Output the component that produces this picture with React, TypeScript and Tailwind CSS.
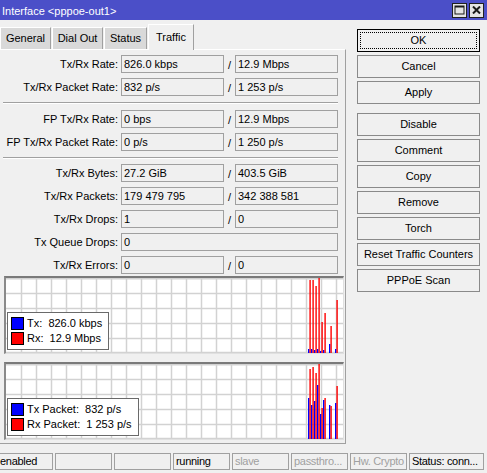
import React from "react";

type Bar = { x: number; blue: number; red: number };

const chart1: Bar[] = [
  { x: 302, blue: 349, red: 280 },
  { x: 305, blue: 349, red: 280 },
  { x: 308, blue: 350, red: 286 },
  { x: 311, blue: 349, red: 278 },
  { x: 314, blue: 351, red: 322 },
  { x: 317, blue: 350, red: 313 },
  { x: 323, blue: 344, red: 326 },
  { x: 329, blue: 349, red: 300 },
];

const chart2: Bar[] = [
  { x: 302, blue: 398, red: 369 },
  { x: 305, blue: 405, red: 367 },
  { x: 308, blue: 401, red: 373 },
  { x: 311, blue: 385, red: 364 },
  { x: 314, blue: 414, red: 408 },
  { x: 317, blue: 400, red: 398 },
  { x: 323, blue: 405, red: 406 },
  { x: 329, blue: 403, red: 386 },
];

function Field({ value, wide }: { value: string; wide?: boolean }) {
  return (
    <div
      className={`h-[18px] border border-[#a0a0a0] bg-[#f0f0f0] pl-[2px] leading-[16px] whitespace-nowrap overflow-hidden ${
        wide ? "w-[217px]" : "w-[103px]"
      }`}
    >
      {value}
    </div>
  );
}

function Row({ label, a, b }: { label: string; a: string; b?: string }) {
  return (
    <div className="flex h-[18px]">
      <div className="w-[118px] shrink-0 text-right leading-[18px]">{label}</div>
      <div className="ml-[3px] flex">
        {b === undefined ? (
          <Field value={a} wide />
        ) : (
          <>
            <Field value={a} />
            <div className="w-[11px] text-center leading-[20px]">/</div>
            <Field value={b} />
          </>
        )}
      </div>
    </div>
  );
}

function Separator({ mb }: { mb: string }) {
  return <div className={`ml-[3px] mt-[6px] h-[2px] w-[335px] border-t border-b border-t-[#a0a0a0] border-b-white ${mb}`} />;
}

function Chart({ bars, top, legend }: { bars: Bar[]; top: number; legend: [string, string] }) {
  const vlines = [];
  for (let x = 15.5; x < 337; x += 15) vlines.push(x);
  const hlines = [0.75, 15.5, 30.5, 45.5, 60.5, 74.5];
  return (
    <div className="relative ml-[4px] h-[78px] w-[340px] border-t-2 border-l-2 border-r border-b border-t-[#7a7a7a] border-l-[#8a8a8a] border-r-[#e0e0e0] border-b-[#e0e0e0] bg-white">
      <svg width="337" height="75" className="block">
        {vlines.map((x) => (
          <line key={"v" + x} x1={x} x2={x} y1={0} y2={75} stroke="#d2d2d2" strokeWidth={1.5} />
        ))}
        {hlines.map((y) => (
          <line key={"h" + y} x1={0} x2={337} y1={y} y2={y} stroke="#d2d2d2" strokeWidth={1.5} />
        ))}
        {bars.map((b) => (
          <g key={b.x}>
            <rect x={b.x} y={b.blue - top} width={1.4} height={75 - (b.blue - top)} fill="#0000ff" />
            <rect x={b.x + 1.4} y={b.red - top} width={1.4} height={75 - (b.red - top)} fill="#ff0000" />
          </g>
        ))}
      </svg>
      <div className="absolute left-[1px] top-[34px] border border-[#6a6a6a] bg-white pl-[3px] pr-[6px] pt-[3px] pb-[3px]">
        <div className="flex h-[15px] items-center">
          <div className="h-[13px] w-[13px] border border-black bg-[#0000ff]" />
          <span className="ml-[3px] whitespace-pre text-[11px] leading-[13px]">{legend[0]}</span>
        </div>
        <div className="flex h-[15px] items-center">
          <div className="h-[13px] w-[13px] border border-black bg-[#ff0000]" />
          <span className="ml-[3px] whitespace-pre text-[11px] leading-[13px]">{legend[1]}</span>
        </div>
      </div>
    </div>
  );
}

function Btn({ label, focused, className = "" }: { label: string; focused?: boolean; className?: string }) {
  return (
    <div
      className={`relative flex h-[23px] w-[123px] items-center justify-center bg-[#f0f0f0] border ${
        focused ? "border-black" : "border-[#8a8a8a]"
      } ${className}`}
    >
      {focused && <span className="absolute inset-[2px] border border-dotted border-black" />}
      <span className="relative">{label}</span>
    </div>
  );
}

function Tab({ label, w, active }: { label: string; w: string; active?: boolean }) {
  return (
    <div
      className={`flex items-center justify-center border-t border-l border-r border-t-white border-l-white border-r-[#a0a0a0] ${w} ${
        active ? "relative z-10 -mb-[1px] h-[26px] bg-[#f0f0f0]" : "h-[22px] bg-[#d9d9d9] mr-[1px]"
      }`}
    >
      {label}
    </div>
  );
}

function Cell({ text, dim, w = "w-[57px]" }: { text: string; dim?: boolean; w?: string }) {
  return (
    <div
      className={`h-[17px] shrink-0 border border-[#a0a0a0] pl-[2px] leading-[15px] tracking-[-0.3px] whitespace-nowrap overflow-hidden ${w} ${
        dim ? "text-[#a0a0a0]" : "text-black"
      }`}
    >
      {text}
    </div>
  );
}

export default function App() {
  return (
    <div className="h-[473px] w-[487px] overflow-hidden bg-[#f0f0f0] font-['Liberation_Sans',Arial,sans-serif] text-[11px] text-black">
      {/* Title bar */}
      <div className="flex h-[20px] items-center bg-[#4b4fc8] pl-[2px] text-white">
        <span className="flex-1 pt-[2px] text-[11px]">Interface &lt;pppoe-out1&gt;</span>
        <div className="flex h-[15px] w-[15px] items-center justify-center border border-[#202020] bg-[#e4e4e4]">
          <svg width="11" height="10" viewBox="0 0 11 10">
            <rect x="1" y="1" width="9" height="8" fill="none" stroke="#1a1a1a" strokeWidth="1" />
            <rect x="1" y="1" width="9" height="1.5" fill="#1a1a1a" />
          </svg>
        </div>
        <div className="ml-[2px] mr-[3px] flex h-[15px] w-[15px] items-center justify-center border border-[#202020] bg-[#e4e4e4]">
          <svg width="9" height="8" viewBox="0 0 9 8">
            <path d="M1 0.5 L8 7.5 M8 0.5 L1 7.5" stroke="#1a1a1a" strokeWidth="2" />
          </svg>
        </div>
      </div>

      <div className="flex">
        {/* Left: tabs + panel */}
        <div className="w-[346px] shrink-0">
          <div className="flex h-[29px] items-end">
            <Tab label="General" w="w-[51px]" />
            <Tab label="Dial Out" w="w-[51px]" />
            <Tab label="Status" w="w-[43px]" />
            <Tab label="Traffic" w="w-[46px]" active />
          </div>
          <div className="border-t border-r border-b border-t-white border-r-[#a0a0a0] border-b-[#a0a0a0] pt-[5px] pb-[3px]">
            <div className="flex flex-col gap-[5px]">
              <Row label="Tx/Rx Rate:" a="826.0 kbps" b="12.9 Mbps" />
              <Row label="Tx/Rx Packet Rate:" a="832 p/s" b="1 253 p/s" />
            </div>
            <Separator mb="mb-[6px]" />
            <div className="flex flex-col gap-[5px]">
              <Row label="FP Tx/Rx Rate:" a="0 bps" b="12.9 Mbps" />
              <Row label="FP Tx/Rx Packet Rate:" a="0 p/s" b="1 250 p/s" />
            </div>
            <Separator mb="mb-[5px]" />
            <div className="flex flex-col gap-[5px]">
              <Row label="Tx/Rx Bytes:" a="27.2 GiB" b="403.5 GiB" />
              <Row label="Tx/Rx Packets:" a="179 479 795" b="342 388 581" />
              <Row label="Tx/Rx Drops:" a="1" b="0" />
              <Row label="Tx Queue Drops:" a="0" />
              <Row label="Tx/Rx Errors:" a="0" b="0" />
            </div>
            <div className="mt-[2px]">
              <Chart bars={chart1} top={278} legend={["Tx:  826.0 kbps", "Rx:  12.9 Mbps"]} />
            </div>
            <div className="mt-[8px]">
              <Chart bars={chart2} top={364} legend={["Tx Packet:  832 p/s", "Rx Packet:  1 253 p/s"]} />
            </div>
          </div>
        </div>

        {/* Right: buttons */}
        <div className="ml-[11px] flex flex-col gap-[3px] pt-[9px]">
          <Btn label="OK" focused />
          <Btn label="Cancel" />
          <Btn label="Apply" />
          <Btn label="Disable" className="mt-[6px]" />
          <Btn label="Comment" />
          <Btn label="Copy" />
          <Btn label="Remove" />
          <Btn label="Torch" />
          <Btn label="Reset Traffic Counters" />
          <Btn label="PPPoE Scan" />
        </div>
      </div>

      {/* Status bar */}
      <div className="-ml-[3px] mt-[9px] flex gap-[2px]">
        <Cell text="enabled" w="w-[56px]" />
        <Cell text="" />
        <Cell text="" />
        <Cell text="running" />
        <Cell text="slave" dim />
        <Cell text="passthro..." dim />
        <Cell text="Hw. Crypto" dim />
        <Cell text="Status: conn..." w="w-[75px]" />
      </div>
    </div>
  );
}
